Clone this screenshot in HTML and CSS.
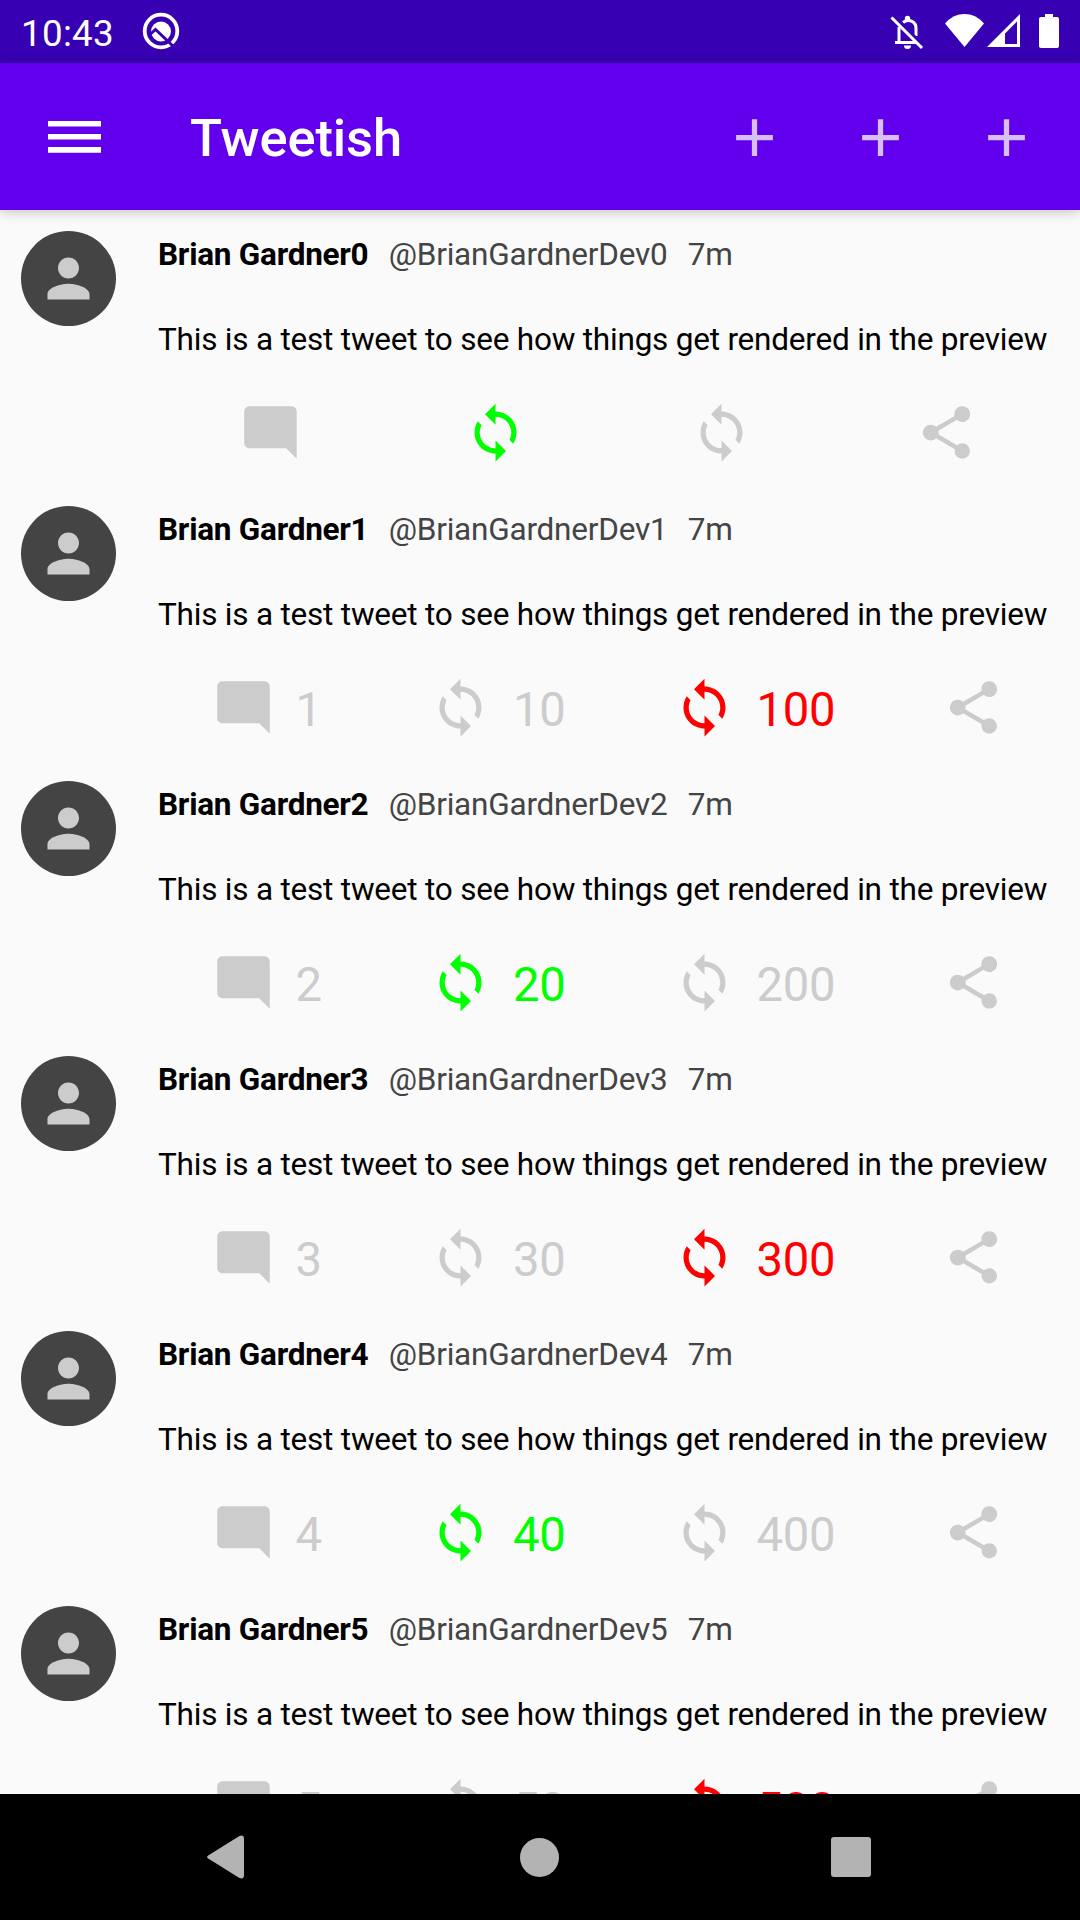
FILE: index.html
```
<!DOCTYPE html>
<html lang="en">
<head>
<meta charset="utf-8">
<title>Tweetish</title>
<link rel="stylesheet" href="styles.css">
</head>
<body>
<svg class="sprite" aria-hidden="true">
  <symbol id="comment" viewBox="0 0 24 24"><path d="M21.99 4c0-1.1-.89-2-1.99-2H4c-1.1 0-2 .9-2 2v12c0 1.1.9 2 2 2h14l4 4-.01-18z"/></symbol>
  <symbol id="sync" viewBox="0 0 24 24"><path d="M12 4V1L8 5l4 4V6c3.31 0 6 2.69 6 6 0 1.01-.25 1.97-.7 2.8l1.46 1.46C19.54 15.03 20 13.57 20 12c0-4.42-3.58-8-8-8zm0 14c-3.31 0-6-2.69-6-6 0-1.01.25-1.97.7-2.8L5.24 7.74C4.46 8.97 4 10.43 4 12c0 4.42 3.58 8 8 8v3l4-4-4-4v3z"/></symbol>
  <symbol id="share" viewBox="0 0 24 24"><path d="M18 16.08c-.76 0-1.44.3-1.96.77L8.91 12.7c.05-.23.09-.46.09-.7s-.04-.47-.09-.7l7.05-4.11c.54.5 1.25.81 2.04.81 1.66 0 3-1.34 3-3s-1.34-3-3-3-3 1.34-3 3c0 .24.04.47.09.7L8.04 9.81C7.5 9.31 6.79 9 6 9c-1.66 0-3 1.34-3 3s1.34 3 3 3c.79 0 1.5-.31 2.04-.81l7.12 4.16c-.05.21-.08.43-.08.65 0 1.61 1.31 2.92 2.92 2.92s2.92-1.31 2.92-2.92-1.31-2.92-2.92-2.92z"/></symbol>
  <symbol id="person" viewBox="0 0 24 24"><path d="M12 12c2.21 0 4-1.79 4-4s-1.79-4-4-4-4 1.79-4 4 1.79 4 4 4zm0 2c-2.67 0-8 1.34-8 4v2h16v-2c0-2.66-5.33-4-8-4z"/></symbol>
  <symbol id="plus" viewBox="0 0 24 24"><path d="M19 13h-6v6h-2v-6H5v-2h6V5h2v6h6v2z"/></symbol>
</svg>

<div class="screen">
  <header class="status-bar">
    <span class="clock">10:43</span>
    <svg class="q-icon" viewBox="0 0 38 38">
      <circle cx="19" cy="19" r="16.300" fill="none" stroke="#fff" stroke-width="3.800"/>
      <circle cx="19" cy="19.500" r="10" fill="#fff"/>
      <path d="M8 22.500 13.500 17.500 31.500 34.500" fill="none" stroke="#3700b3" stroke-width="3"/>
    </svg>
    <span class="spacer"></span>
    <svg class="bell-icon" viewBox="0 0 34 36">
      <path d="M9 13V29M5 28.400H27M13 8.500C19 4 26.500 8 26 15v7" fill="none" stroke="#fff" stroke-width="3"/>
      <path d="M14.800 7V4.500a2.700 2.700 0 0 1 5.400 0V7zM14 31.500h7a3.500 3.500 0 0 1-7 0z" fill="#fff"/>
      <path d="M3.500 1.500 34 32" stroke="#3700b3" stroke-width="3"/>
      <path d="M1.500 3.500 32 34" stroke="#fff" stroke-width="3"/>
    </svg>
    <svg class="wifi-icon" viewBox="0 0 39 33"><path d="M0 9.500C11-3.100 28-3.100 39 9.500L19.500 33z" fill="#fff"/></svg>
    <svg class="signal-icon" viewBox="0 0 33 33"><path fill-rule="evenodd" d="M33 0V33H0zM30 7.500 18 19.500V30H30z" fill="#fff"/></svg>
    <svg class="battery-icon" viewBox="0 0 20 34"><path d="M6 0h8v3h4a2 2 0 0 1 2 2v27a2 2 0 0 1-2 2H2a2 2 0 0 1-2-2V5a2 2 0 0 1 2-2h4z" fill="#fff"/></svg>
  </header>

  <nav class="app-bar">
    <svg class="menu-icon" viewBox="0 0 53 32"><path d="M0 0h53v5.500H0zM0 13h53v5.500H0zM0 26h53v5.700H0z" fill="#fff"/></svg>
    <h1 class="title">Tweetish</h1>
    <div class="bar-actions">
      <svg class="icon"><use href="#plus"/></svg>
      <svg class="icon"><use href="#plus"/></svg>
      <svg class="icon"><use href="#plus"/></svg>
    </div>
  </nav>

  <main class="feed">
    <article class="tweet">
      <div class="avatar"><svg class="person"><use href="#person"/></svg></div>
      <div class="content">
        <div class="byline"><b>Brian Gardner0</b><span>@BrianGardnerDev0</span><span>7m</span></div>
        <p class="text">This is a test tweet to see how things get rendered in the preview</p>
        <div class="actions">
          <div class="action"><svg class="icon"><use href="#comment"/></svg></div>
          <div class="action retweeted"><svg class="icon"><use href="#sync"/></svg></div>
          <div class="action"><svg class="icon"><use href="#sync"/></svg></div>
          <div class="action"><svg class="icon"><use href="#share"/></svg></div>
        </div>
      </div>
    </article>
    <article class="tweet">
      <div class="avatar"><svg class="person"><use href="#person"/></svg></div>
      <div class="content">
        <div class="byline"><b>Brian Gardner1</b><span>@BrianGardnerDev1</span><span>7m</span></div>
        <p class="text">This is a test tweet to see how things get rendered in the preview</p>
        <div class="actions">
          <div class="action"><svg class="icon"><use href="#comment"/></svg><span>1</span></div>
          <div class="action"><svg class="icon"><use href="#sync"/></svg><span>10</span></div>
          <div class="action liked"><svg class="icon"><use href="#sync"/></svg><span>100</span></div>
          <div class="action"><svg class="icon"><use href="#share"/></svg></div>
        </div>
      </div>
    </article>
    <article class="tweet">
      <div class="avatar"><svg class="person"><use href="#person"/></svg></div>
      <div class="content">
        <div class="byline"><b>Brian Gardner2</b><span>@BrianGardnerDev2</span><span>7m</span></div>
        <p class="text">This is a test tweet to see how things get rendered in the preview</p>
        <div class="actions">
          <div class="action"><svg class="icon"><use href="#comment"/></svg><span>2</span></div>
          <div class="action retweeted"><svg class="icon"><use href="#sync"/></svg><span>20</span></div>
          <div class="action"><svg class="icon"><use href="#sync"/></svg><span>200</span></div>
          <div class="action"><svg class="icon"><use href="#share"/></svg></div>
        </div>
      </div>
    </article>
    <article class="tweet">
      <div class="avatar"><svg class="person"><use href="#person"/></svg></div>
      <div class="content">
        <div class="byline"><b>Brian Gardner3</b><span>@BrianGardnerDev3</span><span>7m</span></div>
        <p class="text">This is a test tweet to see how things get rendered in the preview</p>
        <div class="actions">
          <div class="action"><svg class="icon"><use href="#comment"/></svg><span>3</span></div>
          <div class="action"><svg class="icon"><use href="#sync"/></svg><span>30</span></div>
          <div class="action liked"><svg class="icon"><use href="#sync"/></svg><span>300</span></div>
          <div class="action"><svg class="icon"><use href="#share"/></svg></div>
        </div>
      </div>
    </article>
    <article class="tweet">
      <div class="avatar"><svg class="person"><use href="#person"/></svg></div>
      <div class="content">
        <div class="byline"><b>Brian Gardner4</b><span>@BrianGardnerDev4</span><span>7m</span></div>
        <p class="text">This is a test tweet to see how things get rendered in the preview</p>
        <div class="actions">
          <div class="action"><svg class="icon"><use href="#comment"/></svg><span>4</span></div>
          <div class="action retweeted"><svg class="icon"><use href="#sync"/></svg><span>40</span></div>
          <div class="action"><svg class="icon"><use href="#sync"/></svg><span>400</span></div>
          <div class="action"><svg class="icon"><use href="#share"/></svg></div>
        </div>
      </div>
    </article>
    <article class="tweet">
      <div class="avatar"><svg class="person"><use href="#person"/></svg></div>
      <div class="content">
        <div class="byline"><b>Brian Gardner5</b><span>@BrianGardnerDev5</span><span>7m</span></div>
        <p class="text">This is a test tweet to see how things get rendered in the preview</p>
        <div class="actions">
          <div class="action"><svg class="icon"><use href="#comment"/></svg><span>5</span></div>
          <div class="action"><svg class="icon"><use href="#sync"/></svg><span>50</span></div>
          <div class="action liked"><svg class="icon"><use href="#sync"/></svg><span>500</span></div>
          <div class="action"><svg class="icon"><use href="#share"/></svg></div>
        </div>
      </div>
    </article>
  </main>

  <footer class="system-nav">
    <svg class="back" viewBox="0 0 37 44"><path d="M1.200 20.500 32 1.200Q37 -1 37 4V40Q37 45 32 42.800L1.200 23.500Q-1 22 1.200 20.500z"/></svg>
    <span class="home"></span>
    <span class="recents"></span>
  </footer>
</div>
</body>
</html>
```
FILE: styles.css
```
* {
  box-sizing: border-box;
}

body {
  margin: 0;
  font-family: Roboto, sans-serif;
  background: #fafafa;
}

.sprite {
  display: none;
}

svg {
  display: block;
  flex: none;
}

.screen {
  display: flex;
  flex-direction: column;
  width: 1080px;
  height: 1920px;
  overflow: hidden;
}

.status-bar {
  display: flex;
  align-items: flex-start;
  flex: none;
  height: 63px;
  padding: 0 21px;
  background: #3700b3;
  color: #fff;
}

.clock {
  width: 121px;
  font-size: 36.75px;
  line-height: 43px;
  letter-spacing: 0.3px;
  padding-top: 12px;
}

.q-icon {
  width: 38px;
  height: 38px;
  margin-top: 12px;
}

.spacer {
  flex: 1;
}

.bell-icon {
  width: 34px;
  height: 36px;
  margin: 14px 21px 0 0;
}

.wifi-icon {
  width: 39px;
  height: 33px;
  margin: 14px 3px 0 0;
}

.signal-icon {
  width: 33px;
  height: 33px;
  margin: 14px 19px 0 0;
}

.battery-icon {
  width: 20px;
  height: 34px;
  margin-top: 14px;
}

.app-bar {
  position: relative;
  display: flex;
  align-items: center;
  flex: none;
  height: 147px;
  padding: 0 42px 0 48px;
  background: #6200ee;
  color: #fff;
  box-shadow: 0 2px 12px rgba(0, 0, 0, 0.22);
}

.menu-icon {
  width: 53px;
  height: 32px;
  margin-right: 89px;
}

.title {
  flex: 1;
  margin: 0;
  padding-top: 3px;
  font-size: 52.5px;
  font-weight: 500;
  line-height: 62px;
  letter-spacing: -0.1px;
}

.bar-actions {
  display: flex;
  gap: 63px;
  padding-top: 2px;
  color: rgba(255, 255, 255, 0.75);
}

.icon {
  width: 63px;
  height: 63px;
  fill: currentColor;
}

.feed {
  flex: 1;
  min-height: 0;
  overflow: hidden;
}

.tweet {
  display: flex;
  gap: 42px;
  height: 275px;
  padding: 21px;
}

.avatar {
  display: grid;
  place-items: center;
  flex: none;
  width: 95px;
  height: 95px;
  border-radius: 50%;
  background: #444;
  color: #ccc;
}

.person {
  width: 63px;
  height: 63px;
  fill: currentColor;
}

.content {
  flex: 1;
  min-width: 0;
}

.byline,
.text {
  height: 43px;
  margin: 0 0 42px;
  padding-top: 4px;
  font-size: 31.5px;
  line-height: 40px;
  letter-spacing: -0.21px;
  white-space: nowrap;
}

.byline {
  display: flex;
  gap: 20.3px;
  color: #444;
}

.byline b {
  color: #000;
  letter-spacing: -0.25px;
}

.actions {
  display: flex;
  justify-content: space-around;
  height: 63px;
  color: #ccc;
}

.action {
  display: flex;
  gap: 21px;
  font-size: 47.25px;
  line-height: 69px;
  letter-spacing: -0.3px;
}

.retweeted {
  color: #0f0;
}

.liked {
  color: #f00;
}

.system-nav {
  display: grid;
  grid-template-columns: 1fr auto 1fr;
  align-items: center;
  flex: none;
  height: 126px;
  padding: 0 209px 0 207px;
  background: #000;
}

.back {
  width: 37px;
  height: 44px;
  fill: #b3b3b3;
}

.home {
  width: 39px;
  height: 39px;
  margin-left: 1px;
  border-radius: 50%;
  background: #b3b3b3;
}

.recents {
  width: 40px;
  height: 40px;
  justify-self: end;
  border-radius: 3px;
  background: #b3b3b3;
}
```
